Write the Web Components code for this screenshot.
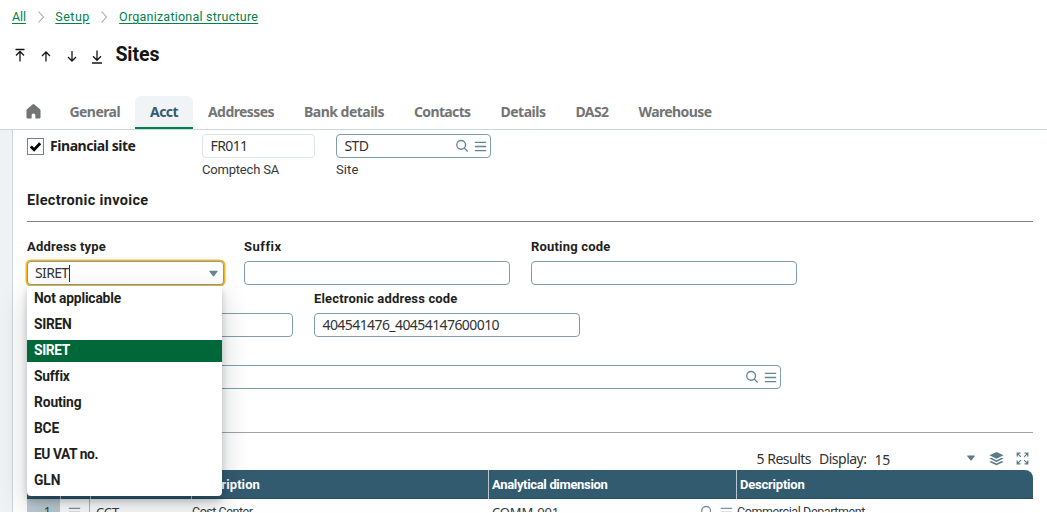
<!DOCTYPE html>
<html lang="en">
<head>
<meta charset="utf-8">
<title>Sites</title>
<style>
    html, body {
        margin: 0;
        height: 100%;
        overflow: hidden;
        background: #fff;
    }
    body {
        color: #1e1f20;
        font-family: Roboto, "Liberation Sans", sans-serif;
        font-size: 13px;
    }
</style>
</head>
<body>
<erp-page></erp-page>
<script>
const ICONS = {
    first: '<path d="M3.500 1.500h9M8 13.500V4M4 7.500l4-4 4 4"/>',
    up: '<path d="M8 13.500V4M4 8l4-4 4 4"/>',
    down: '<path d="M8 3v10M4 9l4 4 4-4"/>',
    last: '<path d="M3 15h10M8 2.500v9.500M4 8.300l4 4 4-4"/>',
    chevron: '<path d="M5.5 2.5l5 5.5-5 5.5"/>',
    home: '<path fill="currentColor" stroke="none" d="M7 .5a1.6 1.6 0 0 1 2 0l5.700 4.700c.5.4.8 1 .8 1.7v7.300c0 .7-.5 1.300-1.300 1.300h-4.200v-3.500a2 2 0 0 0-4 0v3.500H1.800C1 15.500.5 14.900.5 14.200V6.900c0-.7.3-1.300.8-1.700z"/>',
    check: '<path d="M3 8l3.500 3.500L13 4.500" stroke-width="3"/>',
    search: '<circle cx="7" cy="6.7" r="5"/><path d="M10.5 10.3l4 4"/>',
    menu: '<path d="M1 3h14M1 8h14M1 13h14"/>',
    caret: '<path fill="currentColor" stroke="none" d="M2.500 4h11a.6.6 0 0 1 .5 1l-5.400 7a.7.7 0 0 1-1.200 0l-5.400-7a.6.6 0 0 1 .5-1z"/>',
    layers: '<path fill="currentColor" stroke="none" d="M8 1l7.5 3.6L8 8.2.5 4.6zM2.5 7.1 8 9.8l5.5-2.7 2 1L8 11.8.5 8.1zM2.5 10.6 8 13.3l5.5-2.7 2 1L8 15.3.5 11.6z"/>',
    expand: '<path d="M1.5 5.500V1.5H5.500M2 2l4 4M10.500 1.500h4V5.500M14 2l-4 4M1.500 10.500v4H5.500M2 14l4-4M10.500 14.500h4V10.500M14 14l-4-4"/>'
};

// <ui-icon name size weight>
class UiIcon extends HTMLElement {
    connectedCallback() {
        const size = this.getAttribute('size') || 16;
        const weight = this.getAttribute('weight') || 1.5;
        this.attachShadow({ mode: 'open' }).innerHTML = `
            <style>
                :host { display: inline-flex; flex: none; }
                svg { display: block; }
            </style>
            <svg width="${size}" height="${size}" viewBox="0 0 16 16" fill="none"
                stroke="currentColor" stroke-width="${weight}">${ICONS[this.getAttribute('name')]}</svg>
        `;
    }
}

// Text run tracked to an exact width in pixels: <ui-text w="60">
class UiText extends HTMLElement {
    connectedCallback() {
        this.attachShadow({ mode: 'open' }).innerHTML = `
            <style>
                :host { display: inline-block; flex: none; white-space: nowrap; }
            </style>
            <slot></slot>
        `;
        const width = parseFloat(this.getAttribute('w'));
        if (width) {
            const natural = this.getBoundingClientRect().width;
            const count = this.textContent.length;
            this.style.letterSpacing = `${((width - natural) / count).toFixed(3)}px`;
        }
    }
}

class CrumbTrail extends HTMLElement {
    connectedCallback() {
        this.attachShadow({ mode: 'open' }).innerHTML = `
            <style>
                :host {
                    display: flex;
                    align-items: center;
                    height: 16px;
                    padding: 9px 0 0 12px;
                    color: #00814a;
                    font-size: 12.5px;
                    line-height: 16px;
                }
                ui-text { text-decoration: underline; text-underline-offset: 2px; }
                ui-icon { width: 29.3px; justify-content: center; color: #a5a8aa; }
            </style>
            <ui-text w="14">All</ui-text>
            <ui-icon name="chevron" size="16" weight="1.1"></ui-icon>
            <ui-text w="34.5">Setup</ui-text>
            <ui-icon name="chevron" size="16" weight="1.1"></ui-icon>
            <ui-text w="139">Organizational structure</ui-text>
        `;
    }
}

class TitleBar extends HTMLElement {
    connectedCallback() {
        this.attachShadow({ mode: 'open' }).innerHTML = `
            <style>
                :host {
                    display: flex;
                    height: 71px;
                    padding-left: 12px;
                    color: #141516;
                }
                .arrows { display: flex; gap: 9.8px; padding-top: 23px; }
                h1 {
                    margin: 0;
                    padding: 18px 0 0 10px;
                    font-size: 19.5px;
                    font-weight: 700;
                    line-height: 24px;
                }
            </style>
            <div class="arrows">
                <ui-icon name="first" weight="1.3"></ui-icon>
                <ui-icon name="up" weight="1.3"></ui-icon>
                <ui-icon name="down" weight="1.3"></ui-icon>
                <ui-icon name="last" weight="1.3"></ui-icon>
            </div>
            <h1><ui-text w="44">Sites</ui-text></h1>
        `;
    }
}

class TabBar extends HTMLElement {
    connectedCallback() {
        const tabs = [
            ['General', 50.5], ['Acct', 28], ['Addresses', 66], ['Bank details', 80],
            ['Contacts', 56.5], ['Details', 45], ['DAS2', 33], ['Warehouse', 73]
        ];
        this.attachShadow({ mode: 'open' }).innerHTML = `
            <style>
                :host {
                    display: flex;
                    box-sizing: border-box;
                    height: 34px;
                    padding-left: 25.5px;
                    border-bottom: 1px solid #ccd6db;
                    color: #737475;
                    font: 700 14px/32px "Noto Sans", sans-serif;
                }
                ui-icon { width: 29px; padding-top: 8px; }
                .tab { padding: 0 15px; height: 31px; border-bottom: 2px solid transparent; }
                .tab.active {
                    color: #335b70;
                    background: #f0f4f6;
                    border-color: #00814a;
                    border-radius: 6px 6px 0 0;
                }
            </style>
            <ui-icon name="home" size="15"></ui-icon>
            ${tabs.map(([name, w]) => `<div class="tab ${name === 'Acct' ? 'active' : ''}"><ui-text w="${w}">${name}</ui-text></div>`).join('')}
        `;
    }
}

// Form field: label and hint are optional, "tools" adds the lookup icons
class FormField extends HTMLElement {
    connectedCallback() {
        const label = this.getAttribute('label');
        const hint = this.getAttribute('hint');
        const value = this.getAttribute('value');
        this.attachShadow({ mode: 'open' }).innerHTML = `
            <style>
                :host { display: block; flex: none; position: relative; }
                label {
                    display: block;
                    height: 16px;
                    margin-bottom: 6px;
                    font-weight: 700;
                    line-height: 16px;
                }
                .box {
                    display: flex;
                    align-items: center;
                    box-sizing: border-box;
                    height: 24px;
                    padding: 0 3px 0 7.5px;
                    border: 1px solid #7f9dac;
                    border-radius: 4px;
                    background: #fff;
                    color: #303234;
                    font: 14px/22px "Noto Sans", sans-serif;
                }
                :host([readonly]) .box { border-color: #dce4e8; }
                :host([focused]) .box {
                    box-shadow: 0 0 0 1.5px #fbb51c;
                    padding: 0 4px 0 7px;
                }
                .spacer { flex: 1; }
                .caret { width: 1px; height: 17px; background: #333; }
                ui-icon { color: #668592; margin-left: 5px; }
                .hint { height: 16px; padding-top: 4px; line-height: 16px; color: #36383a; }
            </style>
            ${label !== null ? `<label>${label ? `<ui-text w="${this.getAttribute('lw')}">${label}</ui-text>` : ''}</label>` : ''}
            <div class="box">
                ${value ? `<ui-text w="${this.getAttribute('vw')}">${value}</ui-text>` : ''}
                ${this.hasAttribute('focused') ? '<span class="caret"></span>' : ''}
                <span class="spacer"></span>
                ${this.hasAttribute('tools') ? '<ui-icon name="search" size="14"></ui-icon><ui-icon name="menu" size="13" weight="1.6"></ui-icon>' : ''}
                ${this.hasAttribute('focused') ? '<ui-icon name="caret" size="11"></ui-icon>' : ''}
            </div>
            ${hint ? `<div class="hint"><ui-text w="${this.getAttribute('hw')}">${hint}</ui-text></div>` : ''}
            <slot></slot>
        `;
    }
}

// Open list hanging under a field
class OptionList extends HTMLElement {
    connectedCallback() {
        const options = [
            ['Not applicable', 87], ['SIREN', 37.5], ['SIRET', 36], ['Suffix', 35],
            ['Routing', 47.5], ['BCE', 25], ['EU VAT no.', 64], ['GLN', 26.5]
        ];
        this.attachShadow({ mode: 'open' }).innerHTML = `
            <style>
                :host {
                    position: absolute;
                    z-index: 2;
                    top: 47px;
                    left: 0;
                    display: flex;
                    flex-direction: column;
                    gap: 4px;
                    box-sizing: border-box;
                    width: 195px;
                    height: 210px;
                    padding: 2px 0 4px;
                    border-radius: 0 0 4px 4px;
                    background: #fff;
                    box-shadow: 0 5px 6px rgba(0, 20, 29, .2), 0 10px 28px rgba(0, 20, 29, .2);
                    font-size: 13.8px;
                    font-weight: 700;
                }
                .option { height: 22px; padding-left: 7px; line-height: 20px; }
                .option.selected { background: #006738; color: #fff; }
            </style>
            ${options.map(([name, w]) => `<div class="option ${name === 'SIRET' ? 'selected' : ''}"><ui-text w="${w}">${name}</ui-text></div>`).join('')}
        `;
    }
}

class CheckField extends HTMLElement {
    connectedCallback() {
        this.attachShadow({ mode: 'open' }).innerHTML = `
            <style>
                :host { display: flex; gap: 6px; width: 175px; padding-top: 4px; }
                .box {
                    display: flex;
                    box-sizing: border-box;
                    width: 17px;
                    height: 17px;
                    border: 1px solid #668592;
                    color: #000;
                }
                ui-text { font: 700 14px/16px "Noto Sans", sans-serif; }
            </style>
            <span class="box"><ui-icon name="check" size="15"></ui-icon></span>
            <ui-text w="85.5">Financial site</ui-text>
        `;
    }
}

class ResultGrid extends HTMLElement {
    connectedCallback() {
        this.attachShadow({ mode: 'open' }).innerHTML = `
            <style>
                :host { display: block; }
                .bar {
                    display: flex;
                    justify-content: flex-end;
                    align-items: center;
                    height: 22px;
                    padding: 0 4px 0 0;
                    color: #303234;
                    font: 14px/22px "Noto Sans", sans-serif;
                }
                .bar ui-icon { color: #5a7b89; margin-top: -2px; }
                .display { margin-left: 8px; }
                .count { margin: 2px 76px 0 8px; }
                .row { display: grid; grid-template-columns: 33px 30px 101px 297px 248px 1fr; }
                .row > * { box-sizing: border-box; }
                .head {
                    height: 28px;
                    background: #335b70;
                    border-bottom: 1px solid #2a4d60;
                    border-radius: 0 8px 0 0;
                    color: #fff;
                    font-weight: 700;
                    line-height: 29px;
                }
                .head span + span { border-left: 1px solid #b9c7cf; padding-left: 3px; }
                .body { height: 26px; line-height: 26px; color: #36383a; font-size: 12.5px; }
                .body > * { display: flex; align-items: center; }
                .body > * { padding-left: 4px; }
                .body .num { padding: 0 9px 0 0; justify-content: flex-end; background: #bdcbd2; color: #24414f; font-family: "Noto Sans", sans-serif; }
                .body .act { padding: 0; justify-content: center; border-right: 1px solid #a9bac3; }
                .body ui-icon { color: #7893a0; }
                .noto { font-family: "Noto Sans", sans-serif; font-size: 13px; }
                .lookup { gap: 6px; }
                .spacer { flex: 1; }
            </style>
            <div class="bar">
                <ui-text w="54.5">5 Results</ui-text>
                <ui-text class="display" w="47.5">Display:</ui-text>
                <ui-text class="count" w="15.5">15</ui-text>
                <ui-icon name="caret" size="10"></ui-icon>
                <ui-icon name="layers" size="15" style="margin-left: 13px; margin-right: 12px"></ui-icon>
                <ui-icon name="expand" size="13" weight="1.5"></ui-icon>
            </div>
            <div class="row head">
                <span></span><span></span><span></span>
                <span style="padding-left: 0"><ui-text w="68">Description</ui-text></span>
                <span><ui-text w="115.5">Analytical dimension</ui-text></span>
                <span><ui-text w="64.5">Description</ui-text></span>
            </div>
            <div class="row body">
                <span class="num">1</span>
                <span class="act"><ui-icon name="menu" size="13" weight="1.6"></ui-icon></span>
                <span class="noto" style="padding-left: 6px"><ui-text w="23">CCT</ui-text></span>
                <span style="padding-left: 1px"><ui-text w="60.5">Cost Center</ui-text></span>
                <span class="lookup noto"><ui-text w="67">COMM-001</ui-text><span class="spacer"></span><ui-icon name="search" size="14"></ui-icon><ui-icon name="menu" size="13" weight="1.6" style="margin-right: 3px"></ui-icon></span>
                <span style="padding-left: 1px"><ui-text w="128">Commercial Department</ui-text></span>
            </div>
        `;
    }
}

class ErpPage extends HTMLElement {
    connectedCallback() {
        this.attachShadow({ mode: 'open' }).innerHTML = `
            <style>
                :host { display: flex; flex-direction: column; height: 512px; overflow: hidden; }
                main { display: flex; flex: 1; min-height: 0; }
                .gutter {
                    flex: none;
                    box-sizing: border-box;
                    width: 13px;
                    background: #eef2f4;
                    border-right: 1px solid #ccd6db;
                }
                .content {
                    display: flex;
                    flex-direction: column;
                    flex: 1;
                    padding: 4px 14px 0;
                }
                .content > * { flex: none; }
                .line { display: flex; }
                .site { height: 57px; }
                h2 {
                    margin: 0;
                    height: 30px;
                    border-bottom: 1px solid #808284;
                    font-size: 14.5px;
                    font-weight: 700;
                    line-height: 19px;
                }
                .address { gap: 20px; height: 52px; padding-top: 17px; }
                .codes { gap: 21px; height: 52px; }
                .wide { width: 754px; height: 89px; }
                .rule { height: 1px; margin-bottom: 15px; background: #9fa3a5; }
            </style>
            <crumb-trail></crumb-trail>
            <title-bar></title-bar>
            <tab-bar></tab-bar>
            <main>
                <div class="gutter"></div>
                <div class="content">
                    <div class="line site">
                        <check-field></check-field>
                        <form-field readonly value="FR011" vw="37" hint="Comptech SA" hw="77" style="width: 113px"></form-field>
                        <form-field tools value="STD" vw="24" hint="Site" hw="22.5" style="width: 155px; margin-left: 21px"></form-field>
                    </div>
                    <h2><ui-text w="121.5">Electronic invoice</ui-text></h2>
                    <div class="line address">
                        <form-field focused label="Address type" lw="79" value="SIRET" vw="33.500" style="width: 197px">
                            <option-list></option-list>
                        </form-field>
                        <form-field label="Suffix" lw="37" style="width: 266px"></form-field>
                        <form-field label="Routing code" lw="79.5" style="width: 266px; margin-left: 1px"></form-field>
                    </div>
                    <div class="line codes">
                        <form-field label="" style="width: 266px"></form-field>
                        <form-field label="Electronic address code" lw="143.5" value="404541476_40454147600010" vw="176.5" style="width: 266px"></form-field>
                    </div>
                    <form-field class="wide" label="" tools></form-field>
                    <div class="rule"></div>
                    <result-grid></result-grid>
                </div>
            </main>
        `;
    }
}

customElements.define('ui-icon', UiIcon);
customElements.define('ui-text', UiText);
customElements.define('crumb-trail', CrumbTrail);
customElements.define('title-bar', TitleBar);
customElements.define('tab-bar', TabBar);
customElements.define('form-field', FormField);
customElements.define('option-list', OptionList);
customElements.define('check-field', CheckField);
customElements.define('result-grid', ResultGrid);
customElements.define('erp-page', ErpPage);
</script>
</body>
</html>
